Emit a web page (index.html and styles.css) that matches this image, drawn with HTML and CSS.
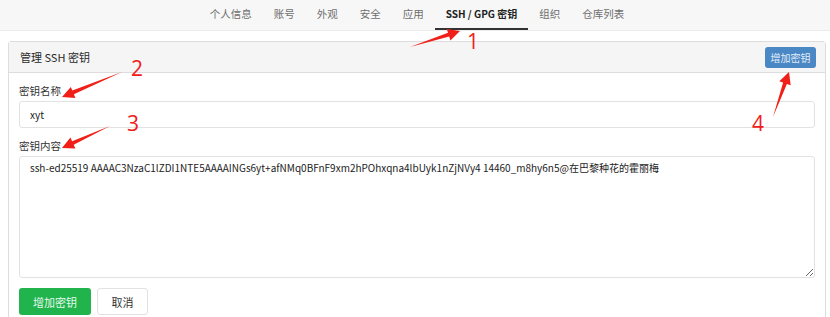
FILE: index.html
```html
<!DOCTYPE html>
<html lang="zh-CN">
  <head>
    <meta charset="UTF-8" />
    <title>SSH / GPG 密钥</title>
    <link rel="stylesheet" href="styles.css">
  </head>
  <body>
    <nav class="tabs">
      <a class="tab">个人信息</a>
      <a class="tab">账号</a>
      <a class="tab">外观</a>
      <a class="tab">安全</a>
      <a class="tab">应用</a>
      <a class="tab active">SSH / GPG 密钥</a>
      <a class="tab">组织</a>
      <a class="tab">仓库列表</a>
    </nav>

    <section class="panel">
      <div class="panel-head">
        <span class="panel-title">管理 SSH 密钥</span>
        <button class="btn btn-blue">增加密钥</button>
      </div>
      <form class="panel-body">
        <label class="field-label">密钥名称</label>
        <input class="field" type="text" value="xyt" />
        <label class="field-label">密钥内容</label>
        <textarea class="field area">ssh-ed25519 AAAAC3NzaC1lZDI1NTE5AAAAINGs6yt+afNMq0BFnF9xm2hPOhxqna4lbUyk1nZjNVy4 14460_m8hy6n5@在巴黎种花的霍丽梅</textarea>
        <div class="actions">
          <button type="button" class="btn btn-green">增加密钥</button>
          <button type="button" class="btn btn-plain">取消</button>
        </div>
      </form>
    </section>

    <svg class="marks" width="830" height="317" viewBox="0 0 830 317">
      <polygon points="410,47 449.2,36.6 450.4,40.4 460,31 446.8,28.9 448,32.8" />
      <polygon points="122,72 73.9,94.2 75.4,97.9 62,97 70.8,86.9 72.3,90.6" />
      <polygon points="110,126 73.7,144.8 75.4,148.5 62,148 70.4,137.5 72.1,141.2" />
      <polygon points="773,117 786.9,84 790.7,85.3 789,72 779.3,81.3 783.1,82.6" />
      <text x="467" y="49">1</text>
      <text x="131" y="76">2</text>
      <text x="127" y="131">3</text>
      <text x="752" y="131">4</text>
    </svg>
  </body>
</html>
```

FILE: styles.css
```css
body {
  margin: 0;
  font-family: "Noto Sans CJK SC", "Noto Sans", sans-serif;
  font-size: 11px;
  color: rgb(51, 51, 51);
  background: rgb(255, 255, 255);
  position: relative;
  width: 830px;
  height: 317px;
  overflow: hidden;
}

.tabs {
  display: flex;
  justify-content: center;
  height: 31px;
  background: rgb(247, 247, 247);
  border-bottom: 1px solid rgb(235, 235, 235);
  box-sizing: border-box;
  padding-left: 4px;
}

.tab {
  display: flex;
  align-items: center;
  color: rgb(110, 110, 110);
  font-size: 10.5px;
  padding: 0 11px 1px;
  border-bottom: 2px solid transparent;
}

.tab.active {
  color: rgb(34, 34, 34);
  font-weight: 600;
  font-size: 10px;
  border-bottom-color: rgb(51, 51, 51);
}

.panel {
  margin: 10px 4px 0 8px;
  border: 1px solid rgb(221, 221, 221);
  border-radius: 3px 3px 0 0;
}

.panel-head {
  display: flex;
  align-items: center;
  justify-content: space-between;
  height: 30px;
  padding: 0 9px 0 11px;
  background: rgb(245, 245, 245);
  border-bottom: 1px solid rgb(221, 221, 221);
}

.panel-title {
  font-size: 11px;
  color: rgb(40, 40, 40);
}

.panel-body {
  display: flex;
  flex-direction: column;
  padding: 10px 10px 12px 10px;
}

.field-label {
  font-size: 10.5px;
  color: rgb(51, 51, 51);
  line-height: 16px;
  margin-bottom: 2px;
}

.field {
  font-family: "Noto Sans CJK SC", "Noto Sans", sans-serif;
  font-size: 10px;
  color: rgb(34, 34, 34);
  border: 1px solid rgb(226, 226, 226);
  border-radius: 3px;
  height: 27px;
  box-sizing: border-box;
  padding: 0 10px;
  margin: 0 0 10px;
  outline: none;
}

.area {
  height: 122px;
  padding: 3px 10px;
  line-height: 16px;
  resize: vertical;
}

.actions {
  display: flex;
  gap: 6px;
}

.btn {
  font-family: "Noto Sans CJK SC", "Noto Sans", sans-serif;
  border-radius: 3px;
  cursor: pointer;
}

.btn-blue {
  background: rgb(74, 135, 197);
  color: rgb(225, 236, 248);
  border: none;
  font-size: 10px;
  width: 51px;
  height: 21px;
  padding: 0;
}

.btn-green {
  background: rgb(33, 180, 77);
  color: rgb(230, 248, 236);
  border: none;
  font-size: 11px;
  width: 72px;
  height: 27px;
}

.btn-plain {
  background: rgb(255, 255, 255);
  color: rgb(51, 51, 51);
  border: 1px solid rgb(226, 226, 226);
  font-size: 11px;
  width: 51px;
  height: 27px;
}

.marks {
  position: absolute;
  left: 0;
  top: 0;
  pointer-events: none;
}

.marks polygon {
  fill: rgb(240, 32, 24);
}

.marks text {
  fill: rgb(240, 32, 24);
  font-family: "Open Sans", sans-serif;
  font-size: 21px;
}
```
